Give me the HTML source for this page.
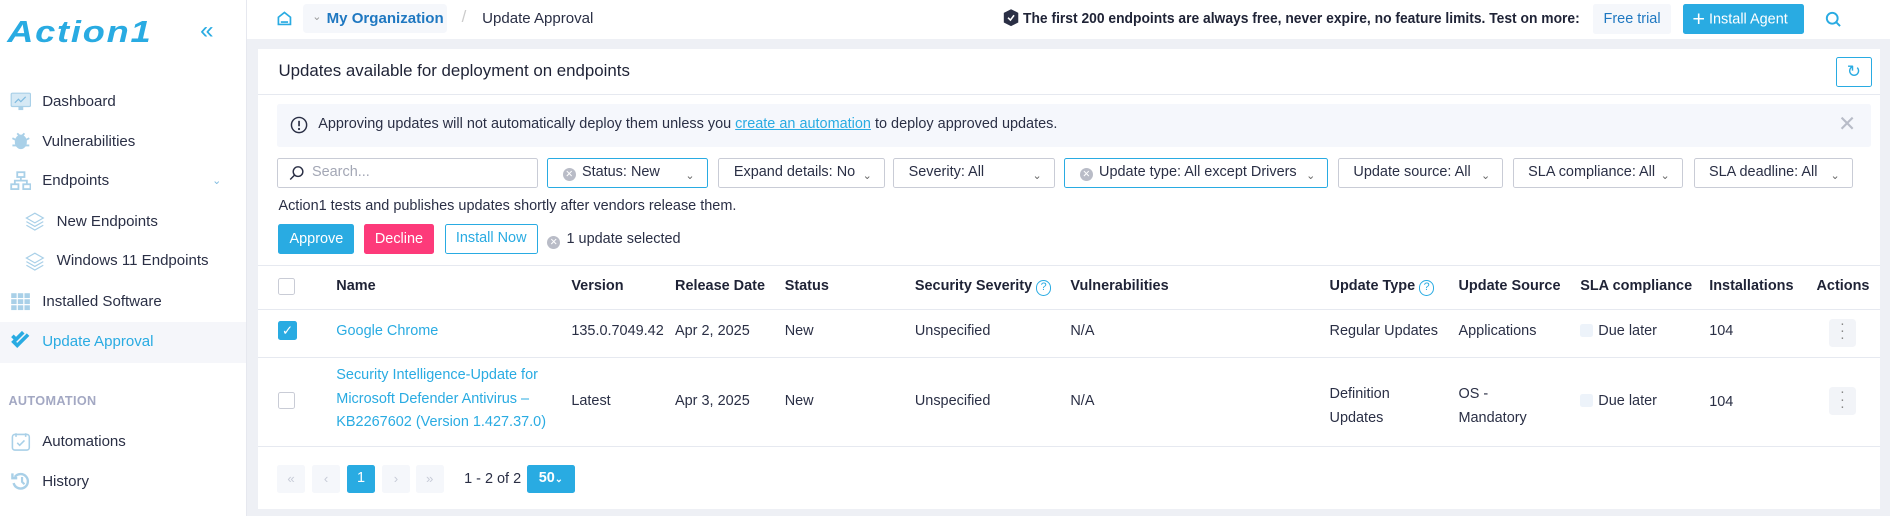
<!DOCTYPE html>
<html><head><meta charset="utf-8">
<style>
*{box-sizing:border-box;margin:0;padding:0}
html,body{width:1890px;height:516px;overflow:hidden;background:#eef0f5}
#root{zoom:1.20536;width:1568px;height:428px;position:relative;font-family:"Liberation Sans",sans-serif;color:#2a2f45;font-size:12px}
.a{position:absolute;white-space:nowrap}
.side{left:0;top:0;width:205px;height:428px;background:#fff;border-right:1px solid #e6e8ef}
.ni{left:35px;font-size:12.5px;color:#2a2f45}
.ic{left:8px;width:18px;height:16px}
.top{left:205px;top:0;width:1363px;height:32px;background:#fff}
.card{left:214px;top:41px;width:1346px;height:381px;background:#fff}
.flt{top:131px;height:25px;border:1px solid #c9ccd6;border-radius:2px;background:#fff;font-size:12px;line-height:23px;padding-left:12px;color:#2a2f45}
.flt.sel{border-color:#29abe2}
.chev{position:absolute;right:10px;top:3px;font-size:9px;color:#666}
.xc{display:inline-block;width:11px;height:11px;border-radius:50%;background:#b9bcc7;color:#fff;font-size:8px;line-height:11px;text-align:center;vertical-align:-1px;margin-right:5px}
.th{top:231px;font-weight:bold;font-size:12px;color:#1f2336}
.td{font-size:12px;color:#2a2f45}
.hl{left:214px;width:1346px;height:1px;background:#e6e9f0}
.cb{width:14px;height:14px;border:1px solid #c9ccd6;border-radius:2px;background:#fff}
.q{display:inline-block;width:13px;height:13px;border:1.3px solid #29abe2;border-radius:50%;color:#29abe2;font-size:9px;line-height:11px;text-align:center;vertical-align:0;margin-left:3px;font-weight:normal}
.lnk{color:#29abe2}
.dots{width:23px;height:23px;background:#f2f4f8;border-radius:3px}
.pg{top:386px;width:23px;height:23px;background:#f5f7fb;border-radius:2px;color:#c8ccd8;text-align:center;line-height:23px;font-size:11px}
</style></head><body><div id="root">

<div class="a side"></div>
<div class="a" style="left:6px;top:12px;font-size:30px;font-weight:bold;font-style:italic;color:#29abe2;letter-spacing:1.5px;transform:scaleY(0.85);transform-origin:left top">Action1</div>
<div class="a" style="left:166px;top:14px;font-size:20px;color:#29abe2">«</div>

<svg class="a ic" style="top:76px" viewBox="0 0 18 16"><rect x="1" y="1" width="16" height="11" rx="1" fill="#d6e9f5" stroke="#a9d0e8"/><path d="M4 9l3-3 2 2 4-4" stroke="#7fbbe0" fill="none"/><rect x="7" y="12" width="4" height="3" fill="#a9d0e8"/></svg>
<div class="a ni" style="top:77px">Dashboard</div>
<svg class="a ic" style="top:109px" viewBox="0 0 18 16"><ellipse cx="9" cy="9" rx="5" ry="6" fill="#a9d0e8"/><path d="M2 6l4 2M16 6l-4 2M2 12h4M12 12h4M6 2l2 2M12 2l-2 2" stroke="#a9d0e8" stroke-width="1.5"/></svg>
<div class="a ni" style="top:110px">Vulnerabilities</div>
<svg class="a ic" style="top:142px" viewBox="0 0 18 16"><rect x="6" y="1" width="6" height="4" fill="none" stroke="#a9d0e8" stroke-width="1.5"/><rect x="1" y="11" width="6" height="4" fill="none" stroke="#a9d0e8" stroke-width="1.5"/><rect x="11" y="11" width="6" height="4" fill="none" stroke="#a9d0e8" stroke-width="1.5"/><path d="M9 5v3M4 11V8h10v3" stroke="#a9d0e8" fill="none" stroke-width="1.5"/></svg>
<div class="a ni" style="top:143px">Endpoints</div>
<div class="a" style="left:176px;top:144px;font-size:9px;color:#7fbbe0">&#8964;</div>
<svg class="a ic" style="left:20px;top:176px" viewBox="0 0 18 16"><path d="M9 1l7 4-7 4-7-4z M2 8l7 4 7-4 M2 11l7 4 7-4" stroke="#a9d0e8" fill="none"/></svg>
<div class="a ni" style="left:47px;top:177px">New Endpoints</div>
<svg class="a ic" style="left:20px;top:209px" viewBox="0 0 18 16"><path d="M9 1l7 4-7 4-7-4z M2 8l7 4 7-4 M2 11l7 4 7-4" stroke="#a9d0e8" fill="none"/></svg>
<div class="a ni" style="left:47px;top:209px">Windows 11 Endpoints</div>
<svg class="a ic" style="top:242px" viewBox="0 0 18 16"><g fill="#a9d0e8"><rect x="1" y="1" width="4.5" height="4"/><rect x="6.5" y="1" width="4.5" height="4"/><rect x="12" y="1" width="4.5" height="4"/><rect x="1" y="6" width="4.5" height="4"/><rect x="6.5" y="6" width="4.5" height="4"/><rect x="12" y="6" width="4.5" height="4"/><rect x="1" y="11" width="4.5" height="4"/><rect x="6.5" y="11" width="4.5" height="4"/><rect x="12" y="11" width="4.5" height="4"/></g></svg>
<div class="a ni" style="top:243px">Installed Software</div>
<div class="a" style="left:0;top:267px;width:204px;height:34px;background:#f5f6fa"></div>
<svg class="a ic" style="top:275px" viewBox="0 0 18 16"><path d="M2 8l4 4 9-9M2 4l3 3 6-6" stroke="#29abe2" stroke-width="3" fill="none"/></svg>
<div class="a ni" style="top:276px;color:#29abe2">Update Approval</div>
<div class="a" style="left:7px;top:327px;font-size:10.5px;font-weight:bold;color:#a3a8c3;letter-spacing:.3px">AUTOMATION</div>
<svg class="a ic" style="top:358px" viewBox="0 0 18 16"><rect x="2" y="2" width="14" height="13" rx="2" fill="none" stroke="#a9d0e8" stroke-width="1.3"/><path d="M6 9l2 2 4-4M5 1v3M13 1v3" stroke="#a9d0e8" fill="none" stroke-width="1.3"/></svg>
<div class="a ni" style="top:359px">Automations</div>
<svg class="a ic" style="top:391px" viewBox="0 0 18 16"><path d="M4 5a6 6 0 1 1 -1 5" stroke="#a9d0e8" stroke-width="2" fill="none"/><path d="M2 2v4h4" stroke="#a9d0e8" stroke-width="2" fill="none"/><path d="M10 5v4l2 2" stroke="#a9d0e8" stroke-width="1.8" fill="none"/></svg>
<div class="a ni" style="top:392px">History</div>

<div class="a top"></div>
<svg class="a" style="left:229px;top:8px" width="14" height="14" viewBox="0 0 14 14"><path d="M2 6l5-4 5 4v6H2z" fill="none" stroke="#29abe2" stroke-width="1.4"/><path d="M4 10h6" stroke="#29abe2" stroke-width="1.4"/></svg>
<div class="a" style="left:251px;top:3px;width:120px;height:24px;background:#f5f7fb;border-radius:3px"></div>
<div class="a" style="left:259px;top:8px;font-size:9px;color:#999">&#8964;</div>
<div class="a" style="left:271px;top:8px;font-size:12.5px;font-weight:bold;color:#1f78c1">My Organization</div>
<div class="a" style="left:383px;top:6px;font-size:14px;color:#ccc">/</div>
<div class="a" style="left:400px;top:8px;font-size:12.5px;color:#2a2f45">Update Approval</div>
<svg class="a" style="left:831px;top:7px" width="15" height="16" viewBox="0 0 15 16"><path d="M7.5 1l6 3v8l-6 3-6-3V4z" fill="#2a2f45"/><path d="M5 8l2 2 3-4" stroke="#fff" stroke-width="1.3" fill="none"/></svg>
<div class="a" style="left:849px;top:8px;font-size:12.5px;font-weight:bold;color:#1f2336;transform:scaleX(0.92);transform-origin:left top">The first 200 endpoints are always free, never expire, no feature limits. Test on more:</div>
<div class="a" style="left:1322px;top:3px;width:64px;height:25px;background:#f5f7fb;border-radius:2px;text-align:center;line-height:25px;font-size:12px;color:#1f78c1">Free trial</div>
<div class="a" style="left:1396px;top:3px;width:101px;height:25px;background:#29abe2;border-radius:2px;color:#fff;font-size:12px;line-height:25px;padding-left:8px"><span style="font-size:18px;vertical-align:-2px">+</span> Install Agent</div>
<svg class="a" style="left:1514px;top:9px" width="14" height="14" viewBox="0 0 14 14"><circle cx="6" cy="6" r="4.5" fill="none" stroke="#29abe2" stroke-width="1.6"/><path d="M9.5 9.5l3 3" stroke="#29abe2" stroke-width="1.6"/></svg>

<div class="a card"></div>
<div class="a" style="left:231px;top:51px;font-size:14px;color:#1f2336">Updates available for deployment on endpoints</div>
<div class="a" style="left:1523px;top:47px;width:30px;height:25px;border:1px solid #29abe2;border-radius:2px;text-align:center;line-height:23px;color:#29abe2;font-size:14px">&#x21bb;</div>
<div class="a" style="left:214px;top:78px;width:1346px;height:1px;background:#e6e9f0"></div>
<div class="a" style="left:230px;top:86px;width:1322px;height:36px;background:#f5f7fc;border-radius:2px"></div>
<svg class="a" style="left:241px;top:96px" width="15" height="15" viewBox="0 0 15 15"><circle cx="7.5" cy="7.5" r="6.3" fill="none" stroke="#2a2f45" stroke-width="1.2"/><path d="M7.5 4v4.5" stroke="#2a2f45" stroke-width="1.4"/><circle cx="7.5" cy="10.8" r=".9" fill="#2a2f45"/></svg>
<div class="a" style="left:264px;top:96px;font-size:12px">Approving updates will not automatically deploy them unless you <span class="lnk" style="text-decoration:underline">create an automation</span> to deploy approved updates.</div>
<div class="a" style="left:1525px;top:92px;font-size:18px;color:#b8bcc8">✕</div>

<div class="a flt" style="left:230px;width:216px;color:#a3a7b5;padding-left:28px">Search...</div>
<svg class="a" style="left:240px;top:137px" width="13" height="13" viewBox="0 0 13 13"><circle cx="7.5" cy="5.5" r="4" fill="none" stroke="#2a2f45" stroke-width="1.2"/><path d="M4.5 8.5l-3.5 3.5" stroke="#2a2f45" stroke-width="1.2"/></svg>
<div class="a flt sel" style="left:454px;width:133px"><span class="xc">✕</span>Status: New<span class="chev">&#8964;</span></div>
<div class="a flt" style="left:596px;width:138px">Expand details: No<span class="chev">&#8964;</span></div>
<div class="a flt" style="left:741px;width:134px">Severity: All<span class="chev">&#8964;</span></div>
<div class="a flt sel" style="left:883px;width:219px"><span class="xc">✕</span>Update type: All except Drivers<span class="chev">&#8964;</span></div>
<div class="a flt" style="left:1110px;width:137px">Update source: All<span class="chev">&#8964;</span></div>
<div class="a flt" style="left:1255px;width:141px">SLA compliance: All<span class="chev">&#8964;</span></div>
<div class="a flt" style="left:1405px;width:132px">SLA deadline: All<span class="chev">&#8964;</span></div>

<div class="a" style="left:231px;top:164px;font-size:12px">Action1 tests and publishes updates shortly after vendors release them.</div>
<div class="a" style="left:231px;top:186px;width:63px;height:25px;background:#29abe2;border-radius:2px;color:#fff;text-align:center;line-height:25px;font-size:12px">Approve</div>
<div class="a" style="left:302px;top:186px;width:58px;height:25px;background:#fd3a7a;border-radius:2px;color:#fff;text-align:center;line-height:25px;font-size:12px">Decline</div>
<div class="a" style="left:369px;top:186px;width:77px;height:25px;border:1px solid #29abe2;border-radius:2px;color:#29abe2;text-align:center;line-height:23px;font-size:12px">Install Now</div>
<div class="a" style="left:454px;top:192px;font-size:12px"><span class="xc">✕</span>1 update selected</div>

<div class="a hl" style="top:220px"></div>
<div class="a cb" style="left:231px;top:231px"></div>
<div class="a th" style="left:279px">Name</div>
<div class="a th" style="left:474px">Version</div>
<div class="a th" style="left:560px">Release Date</div>
<div class="a th" style="left:651px">Status</div>
<div class="a th" style="left:759px">Security Severity<span class="q">?</span></div>
<div class="a th" style="left:888px">Vulnerabilities</div>
<div class="a th" style="left:1103px">Update Type<span class="q">?</span></div>
<div class="a th" style="left:1210px">Update Source</div>
<div class="a th" style="left:1311px">SLA compliance</div>
<div class="a th" style="left:1418px">Installations</div>
<div class="a th" style="left:1507px">Actions</div>
<div class="a hl" style="top:256px"></div>

<div class="a" style="left:231px;top:266px;width:15px;height:16px;background:#29abe2;border-radius:2px;color:#fff;font-size:11px;text-align:center;line-height:16px">✓</div>
<div class="a td lnk" style="left:279px;top:268px">Google Chrome</div>
<div class="a td" style="left:474px;top:268px">135.0.7049.42</div>
<div class="a td" style="left:560px;top:268px">Apr 2, 2025</div>
<div class="a td" style="left:651px;top:268px">New</div>
<div class="a td" style="left:759px;top:268px">Unspecified</div>
<div class="a td" style="left:888px;top:268px">N/A</div>
<div class="a td" style="left:1103px;top:268px">Regular Updates</div>
<div class="a td" style="left:1210px;top:268px">Applications</div>
<div class="a" style="left:1311px;top:269px;width:11px;height:11px;background:#edf3fa;border-radius:2px"></div>
<div class="a td" style="left:1326px;top:268px">Due later</div>
<div class="a td" style="left:1418px;top:268px">104</div>
<div class="a dots" style="left:1517px;top:265px"></div><div class="a" style="left:1526px;top:266px;font-size:12px;color:#888;line-height:6px;width:5px;text-align:center">·<br>·<br>·</div>
<div class="a hl" style="top:296px"></div>

<div class="a cb" style="left:231px;top:325px"></div>
<div class="a td lnk" style="left:279px;top:302px;line-height:19.5px;white-space:normal;width:180px">Security Intelligence-Update for Microsoft Defender Antivirus – KB2267602 (Version 1.427.37.0)</div>
<div class="a td" style="left:474px;top:326px">Latest</div>
<div class="a td" style="left:560px;top:326px">Apr 3, 2025</div>
<div class="a td" style="left:651px;top:326px">New</div>
<div class="a td" style="left:759px;top:326px">Unspecified</div>
<div class="a td" style="left:888px;top:326px">N/A</div>
<div class="a td" style="left:1103px;top:317px;line-height:20px">Definition<br>Updates</div>
<div class="a td" style="left:1210px;top:317px;line-height:20px">OS -<br>Mandatory</div>
<div class="a" style="left:1311px;top:327px;width:11px;height:11px;background:#edf3fa;border-radius:2px"></div>
<div class="a td" style="left:1326px;top:326px">Due later</div>
<div class="a td" style="left:1418px;top:327px">104</div>
<div class="a dots" style="left:1517px;top:321px"></div><div class="a" style="left:1526px;top:323px;font-size:12px;color:#888;line-height:6px;width:5px;text-align:center">·<br>·<br>·</div>
<div class="a hl" style="top:370px"></div>

<div class="a pg" style="left:230px">«</div>
<div class="a pg" style="left:259px">‹</div>
<div class="a pg" style="left:288px;background:#29abe2;color:#fff;font-size:12px">1</div>
<div class="a pg" style="left:317px">›</div>
<div class="a pg" style="left:345px">»</div>
<div class="a" style="left:385px;top:391px;font-size:12px">1 - 2 of 2</div>
<div class="a" style="left:437px;top:386px;width:40px;height:23px;background:#29abe2;border-radius:2px;color:#fff;font-size:12px;line-height:23px;text-align:center;font-weight:bold">50<span style="font-size:8px">&#8964;</span></div>

</div></body></html>
